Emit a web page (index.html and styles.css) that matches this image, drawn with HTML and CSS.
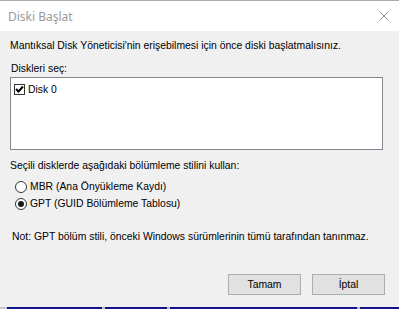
FILE: index.html
```html
<!DOCTYPE html>
<html lang="tr">
<head>
<meta charset="utf-8">
<title>Diski Başlat</title>
<link rel="stylesheet" href="styles.css">
</head>
<body>
<div class="window">
  <div class="titlebar">
    <span class="title">Diski Başlat</span>
    <svg class="close" width="10" height="10" viewBox="0 0 10 10"><path d="M0.5 0.5 L9.5 9.5 M9.5 0.5 L0.5 9.5" stroke="#8a8a8a" stroke-width="1"/></svg>
  </div>
  <div class="content">
    <p class="intro">Mantıksal Disk Yöneticisi'nin erişebilmesi için önce diski başlatmalısınız.</p>
    <p class="label">Diskleri seç:</p>
    <div class="listbox">
      <div class="item">
        <span class="check"><svg width="9" height="9" viewBox="0 0 9 9"><path d="M1 4 L3.5 6.5 L8 1.5" stroke="#000" stroke-width="2" fill="none"/></svg></span>
        <span>Disk 0</span>
      </div>
    </div>
    <p class="label2">Seçili disklerde aşağıdaki bölümleme stilini kullan:</p>
    <div class="radios">
      <div class="radio-row"><span class="radio"></span><span>MBR (Ana Önyükleme Kaydı)</span></div>
      <div class="radio-row"><span class="radio on"><span class="dot"></span></span><span>GPT (GUID Bölümleme Tablosu)</span></div>
    </div>
    <p class="note">Not: GPT bölüm stili, önceki Windows sürümlerinin tümü tarafından tanınmaz.</p>
    <div class="buttons">
      <button class="btn">Tamam</button>
      <button class="btn">İptal</button>
    </div>
  </div>
  <div class="taskbar">
    <span class="seg s0"></span>
    <span class="seg s1"></span>
    <span class="seg s2"></span>
    <span class="seg s3"></span>
    <span class="seg s4"></span>
  </div>
</div>
</body>
</html>
```
FILE: styles.css
```css
* { box-sizing: border-box; }
html, body { margin: 0; padding: 0; }
body {
  width: 399px;
  height: 309px;
  overflow: hidden;
  background: #f0f0f0;
  font-family: "Liberation Sans", Arial, sans-serif;
  font-size: 10.4px;
  color: #000;
}
.window {
  width: 399px;
  height: 309px;
  display: flex;
  flex-direction: column;
  border-top: 1px solid #ababab;
}
.titlebar {
  flex-shrink: 0;
  height: 30px;
  background: #fff;
  display: flex;
  align-items: center;
  justify-content: space-between;
  padding: 0 10px 0 8px;
}
.title {
  font-family: "Noto Sans", "Open Sans", sans-serif;
  font-size: 12px;
  color: #9a9a9a;
  margin-top: 1px;
}
.close { display: block; }
.content {
  flex: 1;
  display: flex;
  flex-direction: column;
  padding: 8px 14px 0 10px;
  white-space: nowrap;
}
p { margin: 0; line-height: 13px; }
.label { margin-top: 10px; padding-left: 1px; }
.listbox {
  flex-shrink: 0;
  margin-top: 2px;
  width: 373px;
  height: 73px;
  background: #fff;
  border: 1px solid #828790;
  padding: 5px 0 0 2px;
}
.item { display: flex; align-items: center; gap: 3px; line-height: 13px; }
.check {
  width: 11px;
  height: 11px;
  border: 1px solid #333;
  background: #fff;
  display: flex;
  align-items: center;
  justify-content: center;
  margin-left: 1px;
}
.check svg { display: block; }
.label2 { margin-top: 9px; }
.radios { margin-top: 8px; display: flex; flex-direction: column; gap: 4px; }
.radio-row { display: flex; align-items: center; gap: 3px; line-height: 13px; padding-left: 5px; }
.radio {
  width: 12px;
  height: 12px;
  border-radius: 50%;
  border: 1px solid #333;
  background: #fff;
  display: flex;
  align-items: center;
  justify-content: center;
}
.dot { width: 6px; height: 6px; border-radius: 50%; background: #1a1a1a; }
.note { margin-top: 20px; padding-left: 2px; }
.buttons {
  margin-top: 31px;
  display: flex;
  justify-content: flex-end;
  gap: 11px;
}
.btn {
  width: 73px;
  height: 21px;
  border: 1px solid #adadad;
  background: #e1e1e1;
  font-family: "Liberation Sans", Arial, sans-serif;
  font-size: 10.4px;
  color: #000;
  padding: 0;
  margin: 0;
}
.taskbar {
  flex-shrink: 0;
  height: 2px;
  display: flex;
  margin-top: auto;
}
.seg { display: block; height: 2px; }
.s0 { width: 7px; background: #c8c8c8; }
.s1 { width: 98px; background: #12128a; border-right: 3px solid #b8b8b8; }
.s2 { width: 65px; background: #12128a; border-right: 3px solid #b8b8b8; }
.s3 { width: 190px; background: #12128a; border-right: 3px solid #b8b8b8; }
.s4 { flex: 1; background: #12128a; }
```
